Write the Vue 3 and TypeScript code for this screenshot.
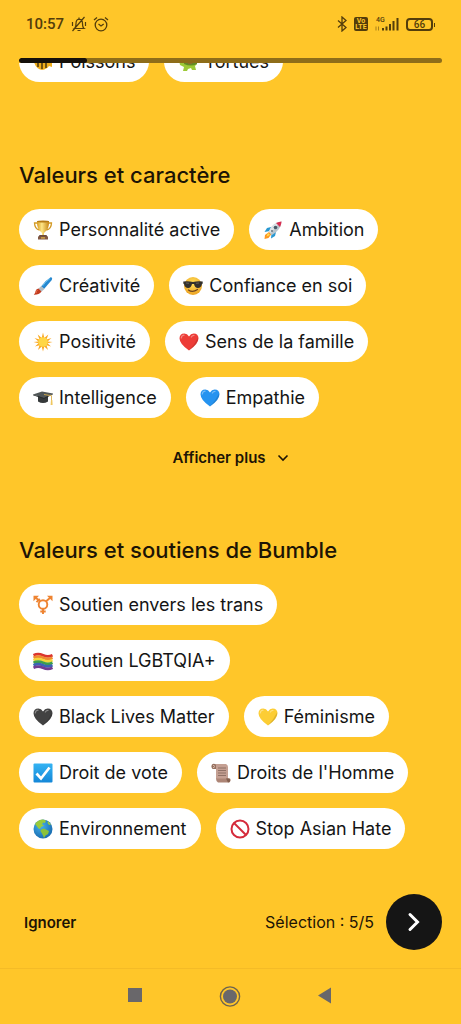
<script setup lang="ts">
import { ref } from 'vue'

interface Chip {
  icon: string
  label: string
}

interface Group {
  title: string
  more: boolean
  chips: Chip[]
}

const pets: Chip[] = [
  { icon: 'fish', label: 'Poissons' },
  { icon: 'turtle', label: 'Tortues' },
]

const groups: Group[] = [
  {
    title: 'Valeurs et caractère',
    more: true,
    chips: [
      { icon: 'trophy', label: 'Personnalité active' },
      { icon: 'rocket', label: 'Ambition' },
      { icon: 'brush', label: 'Créativité' },
      { icon: 'cool', label: 'Confiance en soi' },
      { icon: 'sun', label: 'Positivité' },
      { icon: 'heart-red', label: 'Sens de la famille' },
      { icon: 'cap', label: 'Intelligence' },
      { icon: 'heart-blue', label: 'Empathie' },
    ],
  },
  {
    title: 'Valeurs et soutiens de Bumble',
    more: false,
    chips: [
      { icon: 'trans', label: 'Soutien envers les trans' },
      { icon: 'rainbow', label: 'Soutien LGBTQIA+' },
      { icon: 'heart-black', label: 'Black Lives Matter' },
      { icon: 'heart-yellow', label: 'Féminisme' },
      { icon: 'check', label: 'Droit de vote' },
      { icon: 'scroll', label: "Droits de l'Homme" },
      { icon: 'earth', label: 'Environnement' },
      { icon: 'stop', label: 'Stop Asian Hate' },
    ],
  },
]

const selected = ref<string[]>([])
const progress = 16

function toggle(label: string): void {
  selected.value = selected.value.includes(label)
    ? selected.value.filter((item) => item !== label)
    : [...selected.value, label]
}
</script>

<template>
  <div class="screen">
    <svg class="sprite" aria-hidden="true">
      <defs>
        <linearGradient id="g-gold" x1="0" x2="1">
          <stop offset="0" stop-color="#d79a1c" />
          <stop offset=".4" stop-color="#ffe788" />
          <stop offset="1" stop-color="#c68512" />
        </linearGradient>
        <linearGradient id="g-blue" x1="0" x2="0" y1="0" y2="1">
          <stop offset="0" stop-color="#35b4f3" />
          <stop offset="1" stop-color="#1487d8" />
        </linearGradient>
        <radialGradient id="g-face" cx=".5" cy=".35" r=".65">
          <stop offset="0" stop-color="#ffe05a" />
          <stop offset="1" stop-color="#eda322" />
        </radialGradient>
        <radialGradient id="g-sea" cx=".4" cy=".35" r=".7">
          <stop offset="0" stop-color="#45b1ee" />
          <stop offset="1" stop-color="#1668ac" />
        </radialGradient>
      </defs>
      <symbol id="fish" viewBox="0 0 20 20">
        <path d="M1 10Q3 4 10 4q5 0 7 4l2-2v9l-3-1q-2 3-7 4-6-1-8-8z" fill="#f0ae1c" />
        <path d="M5 6v9M9 5v12M13 6v10" stroke="#4a3710" stroke-width="1.500" />
      </symbol>
      <symbol id="turtle" viewBox="0 0 20 20">
        <path d="M1 8q3-4 6-1l9 1 3 4-2 2 1 4h-4l-1-2-3 1-1 2H5l1-4-4-2z" fill="#9cc936" />
        <path d="M6 12q1-8 7-8t6 8q-6 3-13 0z" fill="#638a24" />
        <path d="M9 8l3-2 3 2-1 4h-4z" fill="#8a6b30" />
      </symbol>
      <symbol id="trophy" viewBox="0 0 20 20">
        <path d="M5 3H1.500q.2 6 5 7M15 3h3.500q-.2 6-5 7" fill="none" stroke="#d39a25" stroke-width="1.300" />
        <path d="M4 1h12q.3 8-4 11l-1 1v3H9v-3l-1-1Q3.700 9 4 1z" fill="url(#g-gold)" />
        <ellipse cx="10" cy="1.500" rx="6" ry="1" fill="#b67b16" />
        <path d="M6.500 15h7l1 2h-9z" fill="#6d4a39" />
        <path d="M5 16.500h10v3H5z" fill="#815845" />
        <path d="M8 17.300h4v1.200H8z" fill="#e3b343" />
      </symbol>
      <symbol id="rocket" viewBox="0 0 20 20">
        <path d="M6 12l-4 3-.5 4 4-1 3-4z" fill="#ff9621" />
        <path d="M5 13l-1.500 3.500L7 15z" fill="#ffdf58" />
        <path d="M8 7L4 8l-2.500 4L7 11zM13 12l-1 4-4 2.500.500-5z" fill="#2898d1" />
        <path d="M6 11Q9 3 18.500 1.500 18 10 9 15q-2-1-3-4z" fill="#b9c5cd" />
        <path d="M6 11Q9 4 17 2L8 13z" fill="#dce4e8" />
        <path d="M13 3q3-1.500 5.500-1.500Q18.500 4 17 7z" fill="#d92e51" />
        <circle cx="12.500" cy="7.500" r="1.800" fill="#475b68" />
        <circle cx="9" cy="11" r="1" fill="#65757f" />
      </symbol>
      <symbol id="brush" viewBox="0 0 20 20">
        <path d="M18 1q2 1 .8 3L11 13l-3-2.500Q13 4 18 1z" fill="#2588d0" />
        <path d="M17 2.500Q12 6 9.500 10" stroke="#6bc0ed" fill="none" />
        <path d="M8.200 10l3.200 3-3 2.800-3-3z" fill="#b1bbc1" />
        <path d="M5.500 12.500l3 3Q6 19 .8 18.800q1.700-2 1.900-4 .5-1.800 2.800-2.300z" fill="#c23c20" />
        <path d="M4.500 14q-1.500 1-1.500 3" stroke="#ed7650" fill="none" />
      </symbol>
      <symbol id="cool" viewBox="0 0 20 20">
        <circle cx="10" cy="10" r="9" fill="url(#g-face)" />
        <path d="M.3 5.500Q5 4.700 10 6q5-1.300 9.700-.5v2l-.8.700Q18 12 15 12q-3 .2-4-4h-2q-1 4.200-4 4-3 0-3.900-3.800L.3 7.500z" fill="#33312d" />
        <path d="M3 7l3 .3M13 7.300L16 7" stroke="#6e6b60" stroke-width=".8" />
        <path d="M5.500 14q4 3 9-.5" fill="none" stroke="#70441f" stroke-width="1.200" stroke-linecap="round" />
      </symbol>
      <symbol id="sun" viewBox="0 0 20 20">
        <path d="M10 .5l1.300 5.500 4-3.500-1.800 5L18.500 6l-4 3.500 5 .5-5 1.200 3.500 3.300-4.500-1.200 1.500 4.700-3.700-3.500L10 19.500l-1.300-5L5 18l1.500-4.700L2 14.500l3.500-3.300L.5 10l5-.5-4-3.500 5 1.500-1.800-5 4 3.500z" fill="#f9a825" />
        <circle cx="10" cy="10" r="4.800" fill="#ffd746" />
      </symbol>
      <symbol id="heart" viewBox="0 0 20 20">
        <path d="M10 18.500Q.5 12 .5 6.300.7 1.500 5.300 1.500q3 0 4.700 3 1.700-3 4.700-3 4.600 0 4.800 4.800 0 5.700-9.500 12.200z" fill="currentColor" />
        <path d="M2.300 6q.3-2.700 2.700-2.800M12.300 5q1-1.700 2.700-1.700" stroke="#fff" stroke-opacity=".38" fill="none" stroke-width="1.200" stroke-linecap="round" />
        <path d="M19.300 5q.5 6.500-9.300 13.500 6-6.500 9.300-13.500z" fill="#000" fill-opacity=".13" />
      </symbol>
      <symbol id="cap" viewBox="0 0 20 20">
        <path d="M5 8v5.500q5 3 10 0V8z" fill="#35393a" />
        <path d="M0 6.500L9 3.500l11 2-9 4.500z" fill="#505657" />
        <path d="M0 6.500L11 10l9-4.500v.8L11 11 0 7.300z" fill="#262a2b" />
        <path d="M11 6.500l7.500 1.200V13" fill="none" stroke="#d7ae4c" stroke-width=".9" />
        <path d="M18 12h1.300l.3 5h-2z" fill="#efc75f" />
      </symbol>
      <symbol id="trans" viewBox="0 0 20 20">
        <g fill="none" stroke="#ee8432" stroke-width="1.900">
          <circle cx="10" cy="9.500" r="4.300" />
          <path d="M13.200 6.300L18 2M6.800 6.300L2 2M3.500 7.200l3.300-3.400M10 14v5M7.300 16.500h5.400" />
        </g>
        <path d="M14 .8h5.500v5.400zM6 .8H.5v5.400z" fill="#ee8432" />
      </symbol>
      <symbol id="rainbow" viewBox="0 0 20 20">
        <g fill="none" stroke-width="2.700">
          <path d="M.5 4.200q4.500-2.200 9.500 0t9.500 0" stroke="#db352e" />
          <path d="M.5 6.700q4.500-2.200 9.500 0t9.500 0" stroke="#ef8b2f" />
          <path d="M.5 9.200q4.500-2.200 9.500 0t9.500 0" stroke="#f4d63b" />
          <path d="M.5 11.700q4.500-2.200 9.500 0t9.500 0" stroke="#3e9f4c" />
          <path d="M.5 14.200q4.500-2.200 9.500 0t9.500 0" stroke="#3a64b4" />
          <path d="M.5 16.700q4.500-2.200 9.500 0t9.500 0" stroke="#713c91" />
        </g>
      </symbol>
      <symbol id="check" viewBox="0 0 20 20">
        <rect x=".5" y=".5" width="19" height="19" rx="1" fill="url(#g-blue)" />
        <path d="M3.500 10.500l4.500 5 8.500-11" fill="none" stroke="#fff" stroke-width="2.700" />
      </symbol>
      <symbol id="scroll" viewBox="0 0 20 20">
        <path d="M3 1h12q2 1 2 3v12H5V5z" fill="#c5a093" />
        <path d="M1 1.500Q3-.2 5 2v4H1.500Q-.3 4 1 1.500z" fill="#94705f" />
        <path d="M2 2.500q1.500-.5 1.500 1T2 4.500" fill="none" stroke="#d9b9ac" />
        <path d="M5 15.500h14q1.300 2-.6 4H7q-2-1-2-4z" fill="#ad8576" />
        <path d="M15 15.500q4-1 4.300 1.500.2 2-2.300 2.500" fill="#84604f" />
        <path d="M7 5h8M7 7.500h8M7 10h8M7 12.500h8" stroke="#896b60" stroke-width=".9" />
      </symbol>
      <symbol id="earth" viewBox="0 0 20 20">
        <circle cx="10" cy="10" r="9.500" fill="url(#g-sea)" />
        <path d="M2 5q3-4.500 8-4.500l3 1-1 2.500-2-.5-1 2 2 1-3 1.500L7 10l-1.500-.5L4 7.500z" fill="#9acb3c" />
        <path d="M8 10.500l3-1 5 2.500-1 3-2.500 1.500L11 19q-1-3-2-4.500L7.500 12z" fill="#8ac23a" />
        <path d="M15 2l3 3.500-2 .5-1.500-2z" fill="#9acb3c" />
      </symbol>
      <symbol id="stop" viewBox="0 0 20 20">
        <circle cx="10" cy="10" r="8.500" fill="#fff" stroke="#d52b3b" stroke-width="2" />
        <path d="M4 4l12 12" stroke="#d52b3b" stroke-width="2" />
      </symbol>
    </svg>

    <header class="status">
      <div class="status-side">
        <span class="time">10:57</span>
        <svg class="bell" viewBox="0 0 16 16" fill="none" stroke="currentColor" stroke-width="1.200" aria-label="Silencieux">
          <path d="M3.500 12.500q1.500-1 1.500-5Q5 3.500 8 3.200q3.500.2 3.500 4.300 0 4 1.500 5zM6.500 14.500h3M8 3V1.500M1.500 6v4M14.500 6v4M13.500 1L1.500 15" />
        </svg>
        <svg class="alarm" viewBox="0 0 16 16" fill="none" stroke="currentColor" stroke-width="1.300" aria-label="Alarme">
          <circle cx="8" cy="9" r="5.800" />
          <path d="M5.500 8L8 10l2.700-2M1 4l3-2.500M15 4l-3-2.500" />
        </svg>
      </div>
      <div class="status-side status-right">
        <svg class="bluetooth" viewBox="0 0 10 16" fill="none" stroke="currentColor" stroke-width="1.300" aria-label="Bluetooth">
          <path d="M1 4.500l8 7L5 15V1l4 3.500-8 7" />
        </svg>
        <span class="volte"><span>Vo</span><span>LTE</span></span>
        <svg class="signal" viewBox="0 0 24 16" fill="currentColor" aria-label="Réseau 4G">
          <text x="1" y="6" class="net">4G</text>
          <path d="M7 12h2v2.500H7zM10.500 10.500h2v4h-2zM14 8h2v6.500h-2zM17.500 5h2v9.500h-2zM21.500 2h2v12.500h-2z" />
          <path d="M1 10.500v4M3.500 10.500v4" stroke="currentColor" stroke-opacity=".5" />
        </svg>
        <span class="battery">66</span>
      </div>
    </header>

    <div class="progress" role="progressbar" aria-label="Progression" :aria-valuenow="progress">
      <div class="progress-fill" :style="{ width: progress + '%' }"></div>
    </div>

    <main class="content">
      <div class="clipped">
        <button v-for="chip in pets" :key="chip.label" type="button" class="chip" @click="toggle(chip.label)">
          <svg class="emoji" aria-hidden="true"><use :href="'#' + chip.icon" /></svg>
          <span>{{ chip.label }}</span>
        </button>
      </div>

      <section v-for="group in groups" :key="group.title" class="group">
        <h2>{{ group.title }}</h2>
        <div class="chips">
          <button v-for="chip in group.chips" :key="chip.label" type="button" class="chip" @click="toggle(chip.label)">
            <svg class="emoji" :class="chip.icon" aria-hidden="true">
              <use :href="chip.icon.startsWith('heart') ? '#heart' : '#' + chip.icon" />
            </svg>
            <span>{{ chip.label }}</span>
          </button>
        </div>
        <button v-if="group.more" type="button" class="more">
          <span>Afficher plus</span>
          <svg viewBox="0 0 12 12" fill="none" stroke="currentColor" stroke-width="1.600" aria-hidden="true">
            <path d="M1.500 3.500L6 8l4.500-4.500" />
          </svg>
        </button>
      </section>
    </main>

    <footer class="actions">
      <button type="button" class="skip">Ignorer</button>
      <span class="count">Sélection : 5/5</span>
      <button type="button" class="next" aria-label="Suivant">
        <svg viewBox="0 0 20 20" fill="none" stroke="currentColor" stroke-width="3" stroke-linecap="round" aria-hidden="true">
          <path d="M6 2.500l7.500 7.500L6 17.500" />
        </svg>
      </button>
    </footer>

    <nav class="system">
      <button type="button" aria-label="Applications récentes">
        <svg viewBox="0 0 22 22"><path d="M4 3h14v14H4z" fill="#69676a" /></svg>
      </button>
      <button type="button" aria-label="Accueil">
        <svg viewBox="0 0 22 22">
          <circle cx="11" cy="11.500" r="9.600" fill="none" stroke="#6d634f" stroke-width="1.400" />
          <circle cx="11" cy="11.500" r="7" fill="#69676a" />
        </svg>
      </button>
      <button type="button" aria-label="Retour">
        <svg viewBox="0 0 22 22"><path d="M4 10.500L17 2.500v16z" fill="#69676a" /></svg>
      </button>
    </nav>
  </div>
</template>

<style>
body {
  background: #ffc629;
}
</style>

<style scoped>
.screen {
  display: flex;
  flex-direction: column;
  min-height: 100vh;
  background: #ffc629;
  color: #1d1405;
  font-family: Inter, "Liberation Sans", sans-serif;
}

.sprite {
  position: absolute;
  width: 0;
  height: 0;
}

button {
  margin: 0;
  padding: 0;
  border: 0;
  background: none;
  color: inherit;
  font: inherit;
  cursor: pointer;
}

.status {
  display: flex;
  justify-content: space-between;
  align-items: center;
  height: 48px;
  padding: 0 26px;
  margin-bottom: 10px;
  color: #533d0b;
  font-family: Roboto, sans-serif;
}

.status-side {
  display: flex;
  align-items: center;
  gap: 6px;
}

.status-right {
  gap: 7px;
}

.time {
  margin-right: 1px;
  font-size: 15px;
  font-weight: 500;
}

.bell,
.alarm {
  width: 16px;
  height: 16px;
}

.bluetooth {
  width: 10px;
  height: 16px;
}

.volte {
  display: flex;
  flex-direction: column;
  align-items: center;
  justify-content: center;
  width: 14px;
  height: 14px;
  border-radius: 2px;
  background: #533d0b;
  color: #ffc629;
  font-size: 7px;
  font-weight: 700;
  line-height: 6px;
}

.signal {
  width: 24px;
  height: 16px;
}

.net {
  font-size: 7px;
  font-weight: 500;
}

.battery {
  position: relative;
  width: 27px;
  height: 13px;
  box-sizing: border-box;
  margin-right: 2px;
  border: 2px solid #533d0b;
  border-radius: 4px;
  font-size: 10px;
  font-weight: 500;
  line-height: 10px;
  text-align: center;
}

.battery::after {
  content: "";
  position: absolute;
  top: 3px;
  right: -4px;
  width: 1px;
  height: 4px;
  background: #533d0b;
}

.progress {
  height: 5px;
  margin: 0 19px;
  border-radius: 3px;
  background: #8e6d19;
  overflow: hidden;
}

.progress-fill {
  height: 100%;
  border-radius: 3px;
  background: #15100a;
}

.content {
  flex: 1;
  padding: 0 19px;
}

.clipped {
  display: flex;
  align-items: flex-end;
  gap: 15px;
  height: 19px;
  overflow: hidden;
}

.group {
  display: flex;
  flex-direction: column;
  padding-top: 78px;
}

.group + .group {
  padding-top: 65px;
}

h2 {
  margin: 0 0 19px;
  font-size: 22px;
  font-weight: 500;
  line-height: 30px;
}

.chips {
  display: flex;
  flex-wrap: wrap;
  gap: 15px;
}

.chip {
  display: flex;
  flex: none;
  align-items: center;
  gap: 6px;
  height: 41px;
  padding: 0 14px;
  border-radius: 21px;
  background: #fff;
  color: #151515;
  font-size: 18px;
  line-height: 24px;
  white-space: nowrap;
}

.emoji {
  flex: none;
  width: 20px;
  height: 20px;
}

.heart-red {
  color: #ed3c37;
}

.heart-blue {
  color: #2593f0;
}

.heart-black {
  color: #424242;
}

.heart-yellow {
  color: #fccd34;
}

.more {
  display: flex;
  align-items: center;
  align-self: center;
  gap: 11px;
  margin-top: 28px;
  font-size: 15px;
  font-weight: 600;
  line-height: 24px;
}

.more svg {
  width: 12px;
  height: 12px;
}

.actions {
  display: flex;
  align-items: center;
  padding: 0 19px 18px 24px;
  border-bottom: 1px solid #f4bb27;
}

.skip {
  font-size: 15px;
  font-weight: 600;
}

.count {
  margin-left: auto;
  margin-right: 12px;
  font-size: 16px;
}

.next {
  display: flex;
  align-items: center;
  justify-content: center;
  width: 56px;
  height: 56px;
  border-radius: 50%;
  background: #151515;
  color: #fff;
}

.next svg {
  width: 20px;
  height: 20px;
}

.system {
  display: flex;
  justify-content: center;
  align-items: center;
  gap: 73px;
  box-sizing: border-box;
  height: 55px;
  padding: 0 2px 2px 0;
}

.system svg {
  display: block;
  width: 22px;
  height: 22px;
}
</style>
